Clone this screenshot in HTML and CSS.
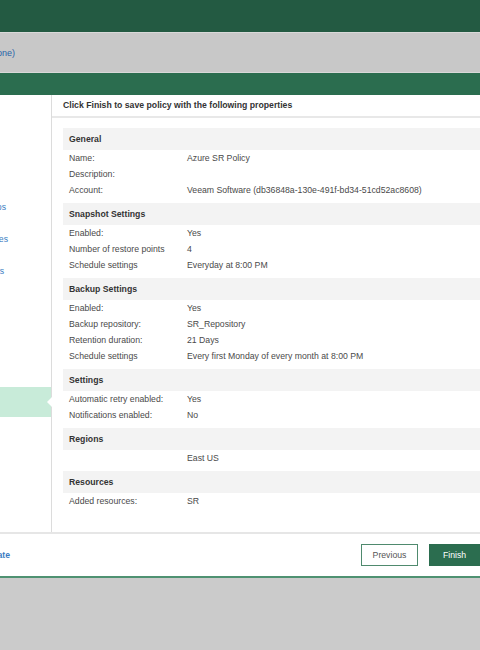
FILE: index.html
```html
<!DOCTYPE html>
<html>
<head>
<meta charset="utf-8">
<link rel="stylesheet" href="styles.css">
</head>
<body>
<div class="topbar"></div>
<div class="crumbbar">
  <div class="clip clip-crumb"><span>Policy (none)</span></div>
</div>
<div class="dialog">
  <div class="dialog-title"></div>
  <div class="dialog-body">
    <nav class="sidebar">
      <div class="step"><div class="clip clip-os"><span>Backup Repos</span></div></div>
      <div class="step"><div class="clip clip-es"><span>Resources</span></div></div>
      <div class="step"><div class="clip clip-s"><span>Settings</span></div></div>
      <div class="step step-selected"></div>
    </nav>
    <main class="content">
      <div class="intro">Click Finish to save policy with the following properties</div>
      <div class="sections">
        <section class="sec">
          <div class="sec-head">General</div>
          <div class="row"><span>Name:</span><span>Azure SR Policy</span></div>
          <div class="row"><span>Description:</span><span></span></div>
          <div class="row"><span>Account:</span><span>Veeam Software (db36848a-130e-491f-bd34-51cd52ac8608)</span></div>
        </section>
        <section class="sec">
          <div class="sec-head">Snapshot Settings</div>
          <div class="row"><span>Enabled:</span><span>Yes</span></div>
          <div class="row"><span>Number of restore points</span><span>4</span></div>
          <div class="row"><span>Schedule settings</span><span>Everyday at 8:00 PM</span></div>
        </section>
        <section class="sec">
          <div class="sec-head">Backup Settings</div>
          <div class="row"><span>Enabled:</span><span>Yes</span></div>
          <div class="row"><span>Backup repository:</span><span>SR_Repository</span></div>
          <div class="row"><span>Retention duration:</span><span>21 Days</span></div>
          <div class="row"><span>Schedule settings</span><span>Every first Monday of every month at 8:00 PM</span></div>
        </section>
        <section class="sec">
          <div class="sec-head">Settings</div>
          <div class="row"><span>Automatic retry enabled:</span><span>Yes</span></div>
          <div class="row"><span>Notifications enabled:</span><span>No</span></div>
        </section>
        <section class="sec">
          <div class="sec-head">Regions</div>
          <div class="row"><span></span><span>East US</span></div>
        </section>
        <section class="sec">
          <div class="sec-head">Resources</div>
          <div class="row"><span>Added resources:</span><span>SR</span></div>
        </section>
      </div>
    </main>
  </div>
  <div class="footer">
    <div class="clip clip-link"><span>Save as template</span></div>
    <div class="buttons">
      <button class="btn btn-prev">Previous</button>
      <button class="btn btn-finish">Finish</button>
    </div>
  </div>
</div>
</body>
</html>
```
FILE: styles.css
```css
html, body {
  margin: 0;
  padding: 0;
}
body {
  width: 480px;
  height: 650px;
  overflow: hidden;
  background: #cbcbcb;
  font-family: "Liberation Sans", Arial, sans-serif;
  font-size: 8.7px;
  color: #4a4a4a;
}
.topbar {
  height: 32px;
  background: #235a42;
}
.crumbbar {
  height: 39px;
  background: #c8c8c8;
  border-top: 1px solid #d9d9d9;
  border-bottom: 1px solid #d9d9d9;
  display: flex;
  align-items: center;
}
.clip {
  display: flex;
  justify-content: flex-end;
  white-space: nowrap;
}
.clip-crumb { width: 15px; color: #2a64a8; font-size: 9px; }
.clip-os { width: 6px; }
.clip-es { width: 8px; }
.clip-s { width: 4px; }
.clip-link { width: 10px; color: #3a7cc2; font-weight: bold; }

.dialog {
  background: #fff;
  border-bottom: 2px solid #4f9272;
}
.dialog-title {
  height: 22px;
  background: #2b6d4f;
}
.dialog-body {
  display: flex;
  height: 437px;
}
.sidebar {
  width: 52px;
  border-right: 1px solid #dcdcdc;
  padding-top: 96px;
  box-sizing: border-box;
  flex: none;
}
.step {
  height: 32px;
  display: flex;
  align-items: center;
  color: #3a7cc2;
}
.step-selected {
  margin-top: 100px;
  height: 30px;
  background: #c8ebd9;
  position: relative;
}
.step-selected::after {
  content: "";
  position: absolute;
  right: -1px;
  top: 10px;
  border-right: 5px solid #fff;
  border-top: 5px solid transparent;
  border-bottom: 5px solid transparent;
}
.content {
  flex: 1;
  min-width: 0;
}
.intro {
  height: 21px;
  line-height: 21px;
  padding-left: 11px;
  font-weight: bold;
  color: #333;
  border-bottom: 2px solid #e8e8e8;
  white-space: nowrap;
}
.sections {
  padding: 10px 0 0 11px;
}
.sec {
  margin-bottom: 5px;
}
.sec-head {
  height: 22px;
  line-height: 22px;
  padding-left: 6px;
  background: #f3f3f3;
  font-weight: bold;
  color: #333;
}
.row {
  display: grid;
  grid-template-columns: 118px 1fr;
  height: 16px;
  line-height: 16px;
  padding-left: 6px;
  white-space: nowrap;
  color: #4a4a4a;
}
.footer {
  height: 42px;
  border-top: 2px solid #e6e6e6;
  display: flex;
  align-items: center;
  justify-content: space-between;
}
.buttons {
  display: flex;
  gap: 11px;
}
.btn {
  height: 22px;
  font-family: "Liberation Sans", Arial, sans-serif;
  font-size: 8.7px;
  padding: 0;
  cursor: pointer;
}
.btn-prev {
  width: 57px;
  background: #fff;
  border: 1px solid #4f8a6e;
  color: #555;
}
.btn-finish {
  width: 51px;
  background: #2b6d4f;
  border: 1px solid #2b6d4f;
  color: #fff;
}
```
